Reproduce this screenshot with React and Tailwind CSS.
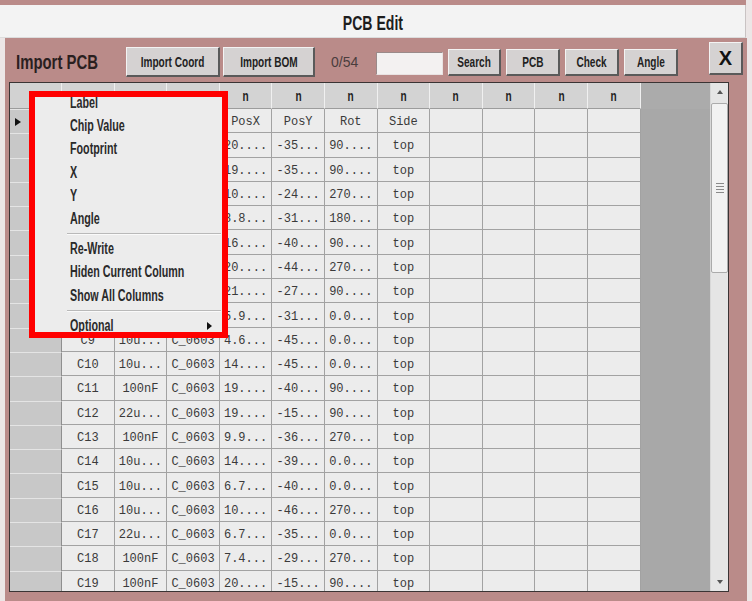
import React from 'react';

const rows = [
  ['', '', '', 'PosX', 'PosY', 'Rot', 'Side'],
  ['', '', '', '20....', '-35...', '90....', 'top'],
  ['', '', '', '19....', '-35...', '90....', 'top'],
  ['', '', '', '10....', '-24...', '270...', 'top'],
  ['', '', '', '8.8...', '-31...', '180...', 'top'],
  ['', '', '', '16....', '-40...', '90....', 'top'],
  ['', '', '', '20....', '-44...', '270...', 'top'],
  ['', '', '', '21....', '-27...', '90....', 'top'],
  ['', '', '', '5.9...', '-31...', '0.0...', 'top'],
  ['C9', '10u...', 'C_0603', '4.6...', '-45...', '0.0...', 'top'],
  ['C10', '10u...', 'C_0603', '14....', '-45...', '0.0...', 'top'],
  ['C11', '100nF', 'C_0603', '19....', '-40...', '90....', 'top'],
  ['C12', '22u...', 'C_0603', '19....', '-15...', '90....', 'top'],
  ['C13', '100nF', 'C_0603', '9.9...', '-36...', '270...', 'top'],
  ['C14', '10u...', 'C_0603', '14....', '-39...', '0.0...', 'top'],
  ['C15', '10u...', 'C_0603', '6.7...', '-40...', '0.0...', 'top'],
  ['C16', '10u...', 'C_0603', '10....', '-46...', '270...', 'top'],
  ['C17', '22u...', 'C_0603', '6.7...', '-35...', '0.0...', 'top'],
  ['C18', '100nF', 'C_0603', '7.4...', '-29...', '270...', 'top'],
  ['C19', '100nF', 'C_0603', '20....', '-15...', '90....', 'top'],
];

const cols = Array.from({ length: 11 });

const menuTop = ['Label', 'Chip Value', 'Footprint', 'X', 'Y', 'Angle'];
const menuMid = ['Re-Write', 'Hiden Current Column', 'Show All Columns'];

// narrow bold face, like the app's own font
const Narrow = ({ children, className = '' }) => (
  <span className={`inline-block whitespace-nowrap font-bold font-['Liberation_Sans',Arial,sans-serif] scale-x-[0.67] ${className}`}>
    {children}
  </span>
);

const Btn = ({ label, className }) => (
  <button className={`flex items-center justify-center pt-[1px] bg-[#d5d2d2] border-t border-l border-r-2 border-b-2 border-t-[#f3f3f3] border-l-[#f3f3f3] border-r-[#5a5a5a] border-b-[#5a5a5a] text-[15px] text-[#231f1f] ${className}`}>
    <Narrow className="origin-center">{label}</Narrow>
  </button>
);

const Sep = () => (
  <div className="h-[7px] pt-[3px] pl-[38px] pr-[7px]">
    <div className="h-px bg-[#b9b9b9]" />
    <div className="h-px bg-[#fafafa]" />
  </div>
);

const MenuItem = ({ label, arrow }) => (
  <div className="h-[23.2px] flex items-center justify-between pt-[1px] pl-[41px] pr-[16px] text-[16px] text-[#2a2a2a]">
    <Narrow className="origin-left">{label}</Narrow>
    {arrow && <div className="w-0 h-0 border-y-[4px] border-y-transparent border-l-[5px] border-l-[#111]" />}
  </div>
);

export default function App() {
  return (
    <div className="relative w-[752px] h-[601px] overflow-hidden bg-[#ece6e6]">
      <div className="h-[5px] w-[746px] bg-[#ba8b89]" />
      <div className="h-[33px] w-[746px] flex items-center justify-center pt-[3px] bg-[#f3f3f3] border-b border-[#dcdcdc] border-r border-r-[#c9c3c3] text-[21px] text-[#1e1e1e]">
        <Narrow className="origin-center">PCB Edit</Narrow>
      </div>

      <div className="ml-[5px] w-[742px] h-[563px] bg-[#ba8b89]">
        <div className="h-[44px] pt-[4px] flex items-center">
          <div className="ml-[11px] w-[110px] text-[21px] text-[#2a1f1f]">
            <Narrow className="origin-left scale-x-[0.71]">Import PCB</Narrow>
          </div>
          <Btn label="Import Coord" className="w-[94px] h-[30px]" />
          <Btn label="Import BOM" className="ml-[3px] w-[92px] h-[30px]" />
          <div className="ml-[16px] w-[29px] text-[14px] text-[#4a3d3d] font-['Liberation_Sans',Arial,sans-serif]">0/54</div>
          <div className="ml-[16px] mt-[3px] w-[67px] h-[23px] bg-[#f3f1f1] border border-t-[#9a8a8a] border-l-[#9a8a8a] border-r-[#e8e2e2] border-b-[#e8e2e2]" />
          <Btn label="Search" className="ml-[5px] w-[53px] h-[27px]" />
          <Btn label="PCB" className="ml-[5px] w-[54px] h-[27px]" />
          <Btn label="Check" className="ml-[5px] w-[54px] h-[27px]" />
          <Btn label="Angle" className="ml-[5px] w-[54px] h-[27px]" />
          <button className="ml-[31px] mb-[7px] w-[34px] h-[33px] flex items-center justify-center bg-[#d5d2d2] border-t border-l border-r-2 border-b-2 border-t-[#f3f3f3] border-l-[#f3f3f3] border-r-[#5a5a5a] border-b-[#5a5a5a] text-[20px] font-bold text-[#111] font-['Liberation_Sans',Arial,sans-serif]">
            X
          </button>
        </div>

        <div className="ml-[4px] w-[720px] h-[510px] border border-[#3a3434] flex overflow-hidden">
          <div className="w-[700px] flex flex-col bg-[#a8a8a8] overflow-hidden">
            <div className="h-[26px] flex shrink-0">
              <div className="w-[52px] bg-[#d2d2d2] border-r border-b border-r-[#eeeeee] border-b-[#9c9c9c]" />
              {cols.map((_, i) => (
                <div key={i} className="w-[52.6px] flex items-center justify-center pt-[2px] bg-[#d3d3d3] border-r border-b border-r-[#f0f0f0] border-b-[#9c9c9c] text-[15px] text-[#222]">
                  {i > 2 && <Narrow className="origin-center">n</Narrow>}
                </div>
              ))}
              <div className="flex-1 bg-[#ababab]" />
            </div>
            {rows.map((r, ri) => (
              <div key={ri} className="h-[24.3px] flex shrink-0">
                <div className="w-[52px] flex items-center pl-[5px] bg-[#c8c8c8] border-t border-r border-t-[#e4e4e4] border-r-[#8f8f8f]">
                  {ri === 0 && <div className="w-0 h-0 border-y-[4px] border-y-transparent border-l-[6px] border-l-[#111]" />}
                </div>
                {cols.map((_, ci) => (
                  <div key={ci} className="w-[52.6px] flex items-center justify-center pt-[3px] bg-[#ececec] border-r border-b border-[#a2a2a2] text-[12px] text-[#3a3a3a] font-['Liberation_Mono',monospace] whitespace-nowrap overflow-hidden">
                    {r[ci] || ''}
                  </div>
                ))}
              </div>
            ))}
          </div>

          <div className="w-[18px] flex flex-col bg-[#e5e5e5] border-l border-[#d8d8d8]">
            <div className="h-[18px] flex items-center justify-center">
              <div className="w-0 h-0 border-x-[3px] border-x-transparent border-b-[4px] border-b-[#555]" />
            </div>
            <div className="flex-1">
              <div className="mt-[2px] h-[170px] bg-[#f2f2f2] border border-[#ababab] rounded-[2px] flex flex-col items-center justify-center gap-[2px]">
                <div className="w-[8px] h-px bg-[#8a8a8a]" />
                <div className="w-[8px] h-px bg-[#8a8a8a]" />
                <div className="w-[8px] h-px bg-[#8a8a8a]" />
                <div className="w-[8px] h-px bg-[#8a8a8a]" />
              </div>
            </div>
            <div className="h-[18px] flex items-center justify-center">
              <div className="w-0 h-0 border-x-[3px] border-x-transparent border-t-[4px] border-t-[#555]" />
            </div>
          </div>
        </div>
      </div>

      <div className="absolute left-[29px] top-[91px] w-[199px] h-[247px] bg-[#ececec] overflow-hidden">
        {menuTop.map((m) => <MenuItem key={m} label={m} />)}
        <Sep />
        {menuMid.map((m) => <MenuItem key={m} label={m} />)}
        <Sep />
        <MenuItem label="Optional" arrow />
        <div className="absolute inset-0 border-[6px] border-[#ff0000]" />
      </div>
    </div>
  );
}
